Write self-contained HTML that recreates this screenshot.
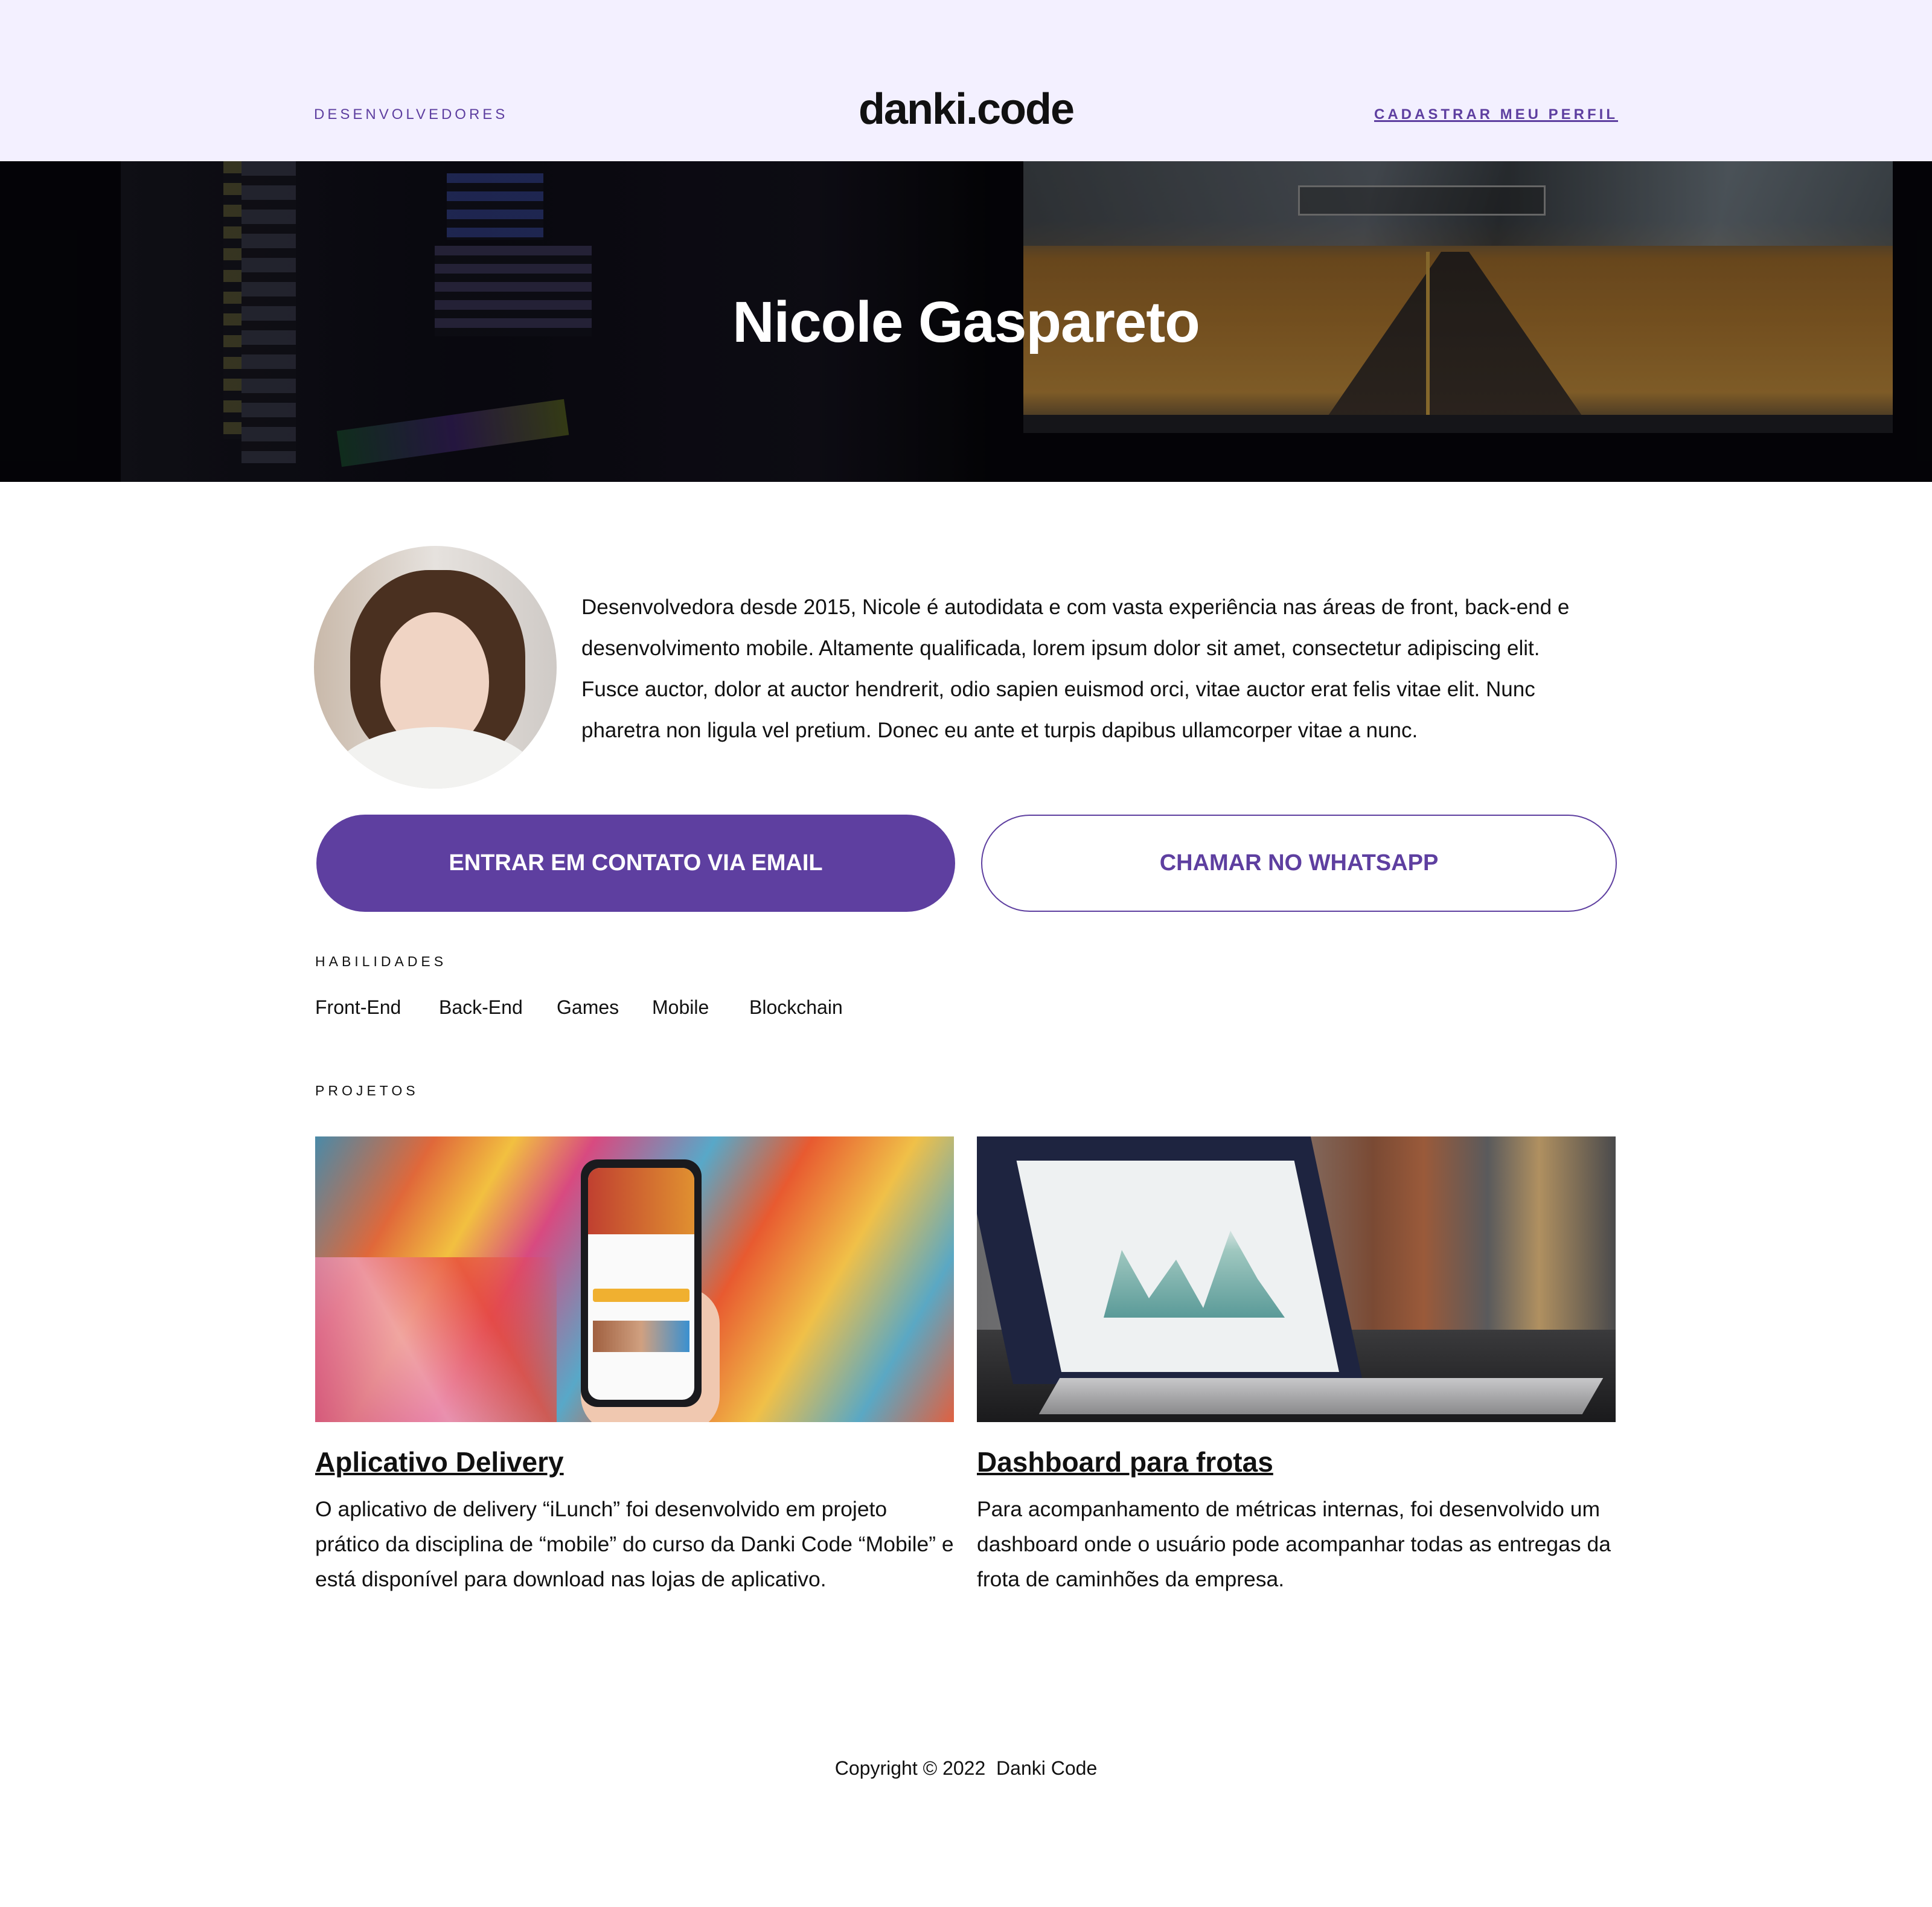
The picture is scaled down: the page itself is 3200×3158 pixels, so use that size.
<!DOCTYPE html>
<html><head><meta charset="utf-8">
<style>
*{margin:0;padding:0;box-sizing:border-box}
html,body{width:3200px;height:3158px;background:#fff;overflow:hidden;font-family:"Liberation Sans",sans-serif;color:#111}
.abs{position:absolute}
header{position:absolute;left:0;top:0;width:3200px;height:267px;background:#f3f0ff}
.nav{position:absolute;top:176px;font-size:24px;letter-spacing:5px;color:#5e3fa0}
.logo{position:absolute;left:1420px;top:140px;width:360px;text-align:center;font-size:72px;font-weight:bold;letter-spacing:-2px;color:#111}
.hero{position:absolute;left:0;top:267px;width:3200px;height:531px;background:#06050a;overflow:hidden}
.hero h1{position:absolute;left:0;width:3200px;top:212px;text-align:center;color:#fff;font-size:96px;font-weight:bold;letter-spacing:-1px}
.para{position:absolute;left:963px;top:972px;width:1650px;font-size:35px;line-height:68px;color:#111}
.btn{position:absolute;top:1349px;height:161px;border-radius:81px;font-size:38px;font-weight:bold;display:flex;align-items:center;justify-content:center}
.lbl{position:absolute;left:522px;font-size:23px;letter-spacing:6px;color:#111}
.sk{position:absolute;top:1650px;font-size:32px}
.ptitle{position:absolute;top:2394px;font-size:46px;font-weight:bold;text-decoration:underline;text-decoration-thickness:4px}
.pdesc{position:absolute;top:2470px;width:1060px;font-size:35.5px;line-height:58px}
</style></head><body>
<header>
<div class="nav" style="left:520px">DESENVOLVEDORES</div>
<div class="logo">danki.code</div>
<div class="nav" style="left:2276px;text-decoration:underline;text-decoration-thickness:3px;font-weight:bold">CADASTRAR MEU PERFIL</div>
</header>
<div class="hero">
  <div class="abs" style="left:200px;top:0;width:1440px;height:531px;background:linear-gradient(90deg,#14141c,#0c0b14 40%,#12101a 80%,#050508)"></div>
  <div class="abs" style="left:370px;top:0;width:30px;height:460px;background:repeating-linear-gradient(180deg,#6b6a3a 0 20px,#15141c 20px 36px);opacity:.6"></div>
  <div class="abs" style="left:400px;top:0;width:90px;height:500px;background:repeating-linear-gradient(180deg,#3b3c4c 0 24px,#15141c 24px 40px);opacity:.7"></div>
  <div class="abs" style="left:740px;top:20px;width:160px;height:110px;background:repeating-linear-gradient(180deg,#2f3c80 0 16px,#12121c 16px 30px);opacity:.8"></div>
  <div class="abs" style="left:720px;top:140px;width:260px;height:150px;background:repeating-linear-gradient(180deg,#403a5e 0 16px,#12121c 16px 30px);opacity:.7"></div>
  <div class="abs" style="left:560px;top:420px;width:380px;height:60px;background:linear-gradient(90deg,#1a5a30,#4a2a80,#6a7a20);opacity:.6;transform:rotate(-8deg)"></div>
  <div class="abs" style="left:1695px;top:0;width:1440px;height:450px;background:linear-gradient(180deg,#48525a 0%,#3e444a 22%,#8a5e26 36%,#9a6a2a 60%,#a87a34 85%,#3a3430 100%)"></div>
  <div class="abs" style="left:1695px;top:0;width:1440px;height:140px;background:linear-gradient(100deg,#3a3e42,#5a6068 40%,#2e3236 55%,#6a747c 80%,#4a5258);opacity:.8"></div>
  <div class="abs" style="left:2180px;top:150px;width:460px;height:300px;background:linear-gradient(180deg,#2a2420,#3a3028);clip-path:polygon(45% 0,55% 0,100% 100%,0 100%)"></div>
  <div class="abs" style="left:2362px;top:150px;width:6px;height:300px;background:#b08a3a"></div>
  <div class="abs" style="left:1695px;top:420px;width:1440px;height:30px;background:#1c1c22"></div>
  <div class="abs" style="left:2150px;top:40px;width:410px;height:50px;border:3px solid #888;background:rgba(30,30,30,.4)"></div>
  <div class="abs" style="left:0;top:0;width:3200px;height:531px;background:rgba(0,0,0,.25)"></div>
  <h1>Nicole Gaspareto</h1>
</div>
<div class="abs" style="left:520px;top:904px;width:402px;height:402px;border-radius:50%;overflow:hidden;background:linear-gradient(90deg,#c9b9aa,#e6e2de 50%,#cfcac6)">
  <div class="abs" style="left:60px;top:40px;width:290px;height:320px;border-radius:45% 45% 40% 40%;background:#4a3020"></div>
  <div class="abs" style="left:110px;top:110px;width:180px;height:230px;border-radius:50%;background:#f0d4c4"></div>
  <div class="abs" style="left:20px;top:300px;width:360px;height:200px;border-radius:50% 50% 0 0;background:#f2f2f0"></div>
</div>
<div class="para">Desenvolvedora desde 2015, Nicole é autodidata e com vasta experiência nas áreas de front, back-end e desenvolvimento mobile. Altamente qualificada, lorem ipsum dolor sit amet, consectetur adipiscing elit. Fusce auctor, dolor at auctor hendrerit, odio sapien euismod orci, vitae auctor erat felis vitae elit. Nunc pharetra non ligula vel pretium. Donec eu ante et turpis dapibus ullamcorper vitae a nunc.</div>
<div class="btn" style="left:524px;width:1058px;background:#5e3fa0;color:#fff">ENTRAR EM CONTATO VIA EMAIL</div>
<div class="btn" style="left:1625px;width:1053px;border:2px solid #5e3fa0;color:#5e3fa0">CHAMAR NO WHATSAPP</div>
<div class="lbl" style="top:1579px">HABILIDADES</div>
<div class="sk" style="left:522px">Front-End</div>
<div class="sk" style="left:727px">Back-End</div>
<div class="sk" style="left:922px">Games</div>
<div class="sk" style="left:1080px">Mobile</div>
<div class="sk" style="left:1241px">Blockchain</div>
<div class="lbl" style="top:1793px">PROJETOS</div>
<div class="abs" style="left:522px;top:1882px;width:1058px;height:473px;overflow:hidden;background:linear-gradient(120deg,#4a8aa8 0%,#e0683a 15%,#f2c040 25%,#d84a80 35%,#58a8c8 50%,#e85a30 62%,#f0c048 75%,#5aa8c4 88%,#e06040 100%)">
  <div class="abs" style="left:0;top:200px;width:400px;height:273px;background:linear-gradient(60deg,#d04a8a,#f0a0b8 40%,#e84a3a 70%,transparent);opacity:.8"></div>
  <div class="abs" style="left:440px;top:250px;width:230px;height:240px;border-radius:60px;background:#f0c8b0"></div>
  <div class="abs" style="left:440px;top:38px;width:200px;height:410px;border-radius:28px;background:#1a1a1e"></div>
  <div class="abs" style="left:452px;top:52px;width:176px;height:384px;border-radius:20px;background:#fafafa"></div>
  <div class="abs" style="left:452px;top:52px;width:176px;height:110px;border-radius:20px 20px 0 0;background:linear-gradient(90deg,#c04030,#e09030)"></div>
  <div class="abs" style="left:460px;top:252px;width:160px;height:22px;border-radius:4px;background:#f0b030"></div>
  <div class="abs" style="left:460px;top:305px;width:160px;height:52px;background:linear-gradient(90deg,#a06040,#d0a080,#3a90d0)"></div>
</div>
<div class="abs" style="left:1618px;top:1882px;width:1058px;height:473px;overflow:hidden;background:linear-gradient(90deg,#6a6a6c 0%,#8a8a8a 40%,#7a4a34 62%,#9a5a3a 70%,#5a5a5c 80%,#b09060 88%,#4a4a4c 100%)">
  <div class="abs" style="left:0;top:320px;width:1058px;height:153px;background:linear-gradient(180deg,#3a3a3c,#1a1a1c)"></div>
  <div class="abs" style="left:60px;top:0;width:580px;height:410px;background:#1e2440;transform:skewX(12deg);transform-origin:bottom"></div>
  <div class="abs" style="left:140px;top:40px;width:460px;height:350px;background:#eef1f2;transform:skewX(12deg);transform-origin:bottom"></div>
  <div class="abs" style="left:210px;top:140px;width:300px;height:160px;background:linear-gradient(0deg,#5a9a98,#a0c8c0 70%,transparent);clip-path:polygon(0 100%,10% 30%,25% 80%,40% 40%,55% 90%,70% 10%,85% 60%,100% 100%)"></div>
  <div class="abs" style="left:120px;top:400px;width:900px;height:60px;background:linear-gradient(180deg,#c8c8ca,#8a8a8c);transform:skewX(-30deg)"></div>
</div>
<div class="ptitle" style="left:522px">Aplicativo Delivery</div>
<div class="ptitle" style="left:1618px">Dashboard para frotas</div>
<div class="pdesc" style="left:522px">O aplicativo de delivery “iLunch” foi desenvolvido em projeto prático da disciplina de “mobile” do curso da Danki Code “Mobile” e está disponível para download nas lojas de aplicativo.</div>
<div class="pdesc" style="left:1618px">Para acompanhamento de métricas internas, foi desenvolvido um dashboard onde o usuário pode acompanhar todas as entregas da frota de caminhões da empresa.</div>
<div class="abs" style="left:0;top:2910px;width:3200px;text-align:center;font-size:32px">Copyright © 2022&nbsp; Danki Code</div>
</body></html>
